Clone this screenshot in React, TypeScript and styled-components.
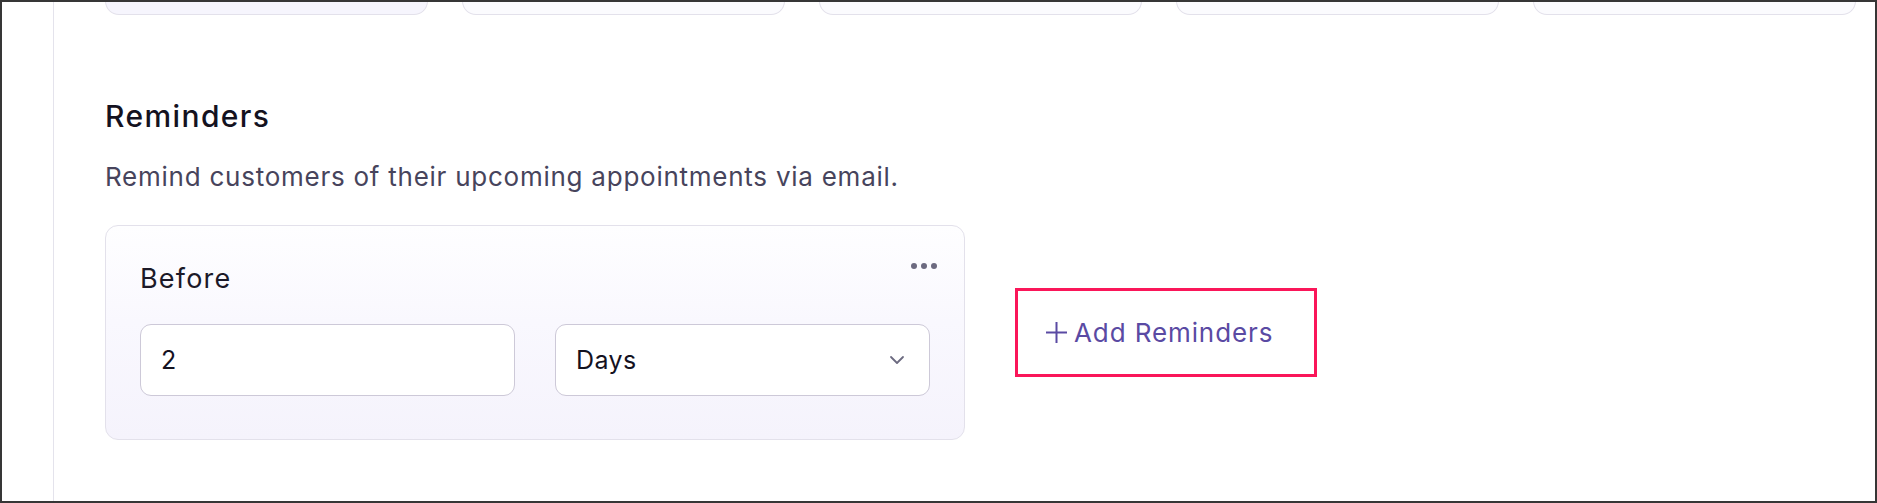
import React from 'react';
import styled, {createGlobalStyle} from 'styled-components';

const GlobalStyle = createGlobalStyle`
  * { box-sizing: border-box; }
  body {
    margin: 0;
    background: #ffffff;
    font-family: Inter, "Noto Sans", sans-serif;
  }
`;

const Frame = styled.div`
  width: 1877px;
  height: 503px;
  border: 2px solid #363636;
  display: flex;
  overflow: hidden;
  background: #fff;
`;

const Gutter = styled.div`
  width: 52px;
  flex-shrink: 0;
  border-right: 1px solid #e4e3ec;
`;

const Content = styled.main`
  flex: 1;
  padding: 0 19px 0 51px;
  display: flex;
  flex-direction: column;
`;

const CardStrip = styled.div`
  height: 13px;
  overflow: hidden;
  display: flex;
  align-items: flex-end;
  gap: 34px;
`;

const StubCard = styled.div<{active?: boolean}>`
  flex: 1;
  height: 40px;
  border: 1px solid #e3e1eb;
  border-top: none;
  border-radius: 0 0 14px 14px;
  background: ${p => (p.active ? '#f6f5fd' : '#fbfbfe')};
`;

const Heading = styled.h2`
  margin: 83px 0 0;
  font-size: 30px;
  line-height: 36px;
  font-weight: 500;
  letter-spacing: 1.4px;
  color: #14121f;
`;

const Description = styled.p`
  margin: 27px 0 0;
  font-size: 26px;
  line-height: 32px;
  font-weight: 400;
  letter-spacing: 0.75px;
  color: #47445c;
`;

const Row = styled.div`
  margin-top: 32px;
  display: flex;
  align-items: center;
  gap: 50px;
`;

const ReminderCard = styled.section`
  position: relative;
  width: 860px;
  height: 215px;
  border: 1px solid #e3e1eb;
  border-radius: 13px;
  padding: 36px 34px 0 34px;
  background: linear-gradient(180deg, #fefeff 0%, #f9f8fe 45%, #f5f3fc 100%);
`;

const CardLabel = styled.div`
  font-size: 27px;
  line-height: 34px;
  letter-spacing: 1.2px;
  color: #1b1928;
`;

const MoreButton = styled.button`
  position: absolute;
  top: 33px;
  right: 23px;
  display: flex;
  gap: 4px;
  padding: 4px;
  border: none;
  background: transparent;

  span {
    width: 6px;
    height: 6px;
    border-radius: 50%;
    background: #6c6a80;
  }
`;

const Fields = styled.div`
  margin-top: 28px;
  display: flex;
  gap: 40px;
`;

const Field = styled.div`
  flex: 1;
  height: 72px;
  border: 1px solid #cdc9d8;
  border-radius: 11px;
  background: #fff;
  display: flex;
  align-items: center;
  justify-content: space-between;
  padding: 0 24px 0 20px;
  font-size: 25px;
  letter-spacing: 0.4px;
  color: #14121f;
`;

const AddButton = styled.button`
  width: 302px;
  height: 89px;
  border: 3px solid #fa1659;
  background: #fff;
  display: flex;
  align-items: center;
  gap: 6px;
  padding: 0 0 0 27px;
  font-family: Inter, "Noto Sans", sans-serif;
  font-size: 26px;
  letter-spacing: 0.9px;
  color: #5a4aa3;
  cursor: pointer;
`;

const Chevron = () => (
  <svg width="16" height="10" viewBox="0 0 16 10" fill="none">
    <path d="M2 2l6 6 6-6" stroke="#6c6a80" strokeWidth="1.8" strokeLinecap="round" strokeLinejoin="round"/>
  </svg>
);

const Plus = () => (
  <svg width="23" height="23" viewBox="0 0 23 23" fill="none">
    <path d="M11.5 1v21M1 11.5h21" stroke="#5a4aa3" strokeWidth="2"/>
  </svg>
);

export default function App() {
  return (
    <>
      <GlobalStyle/>
      <Frame>
        <Gutter/>
        <Content>
          <CardStrip>
            <StubCard active/>
            <StubCard/>
            <StubCard/>
            <StubCard/>
            <StubCard/>
          </CardStrip>
          <Heading>Reminders</Heading>
          <Description>Remind customers of their upcoming appointments via email.</Description>
          <Row>
            <ReminderCard>
              <CardLabel>Before</CardLabel>
              <MoreButton aria-label="More"><span/><span/><span/></MoreButton>
              <Fields>
                <Field>2</Field>
                <Field>Days<Chevron/></Field>
              </Fields>
            </ReminderCard>
            <AddButton><Plus/>Add Reminders</AddButton>
          </Row>
        </Content>
      </Frame>
    </>
  );
}
